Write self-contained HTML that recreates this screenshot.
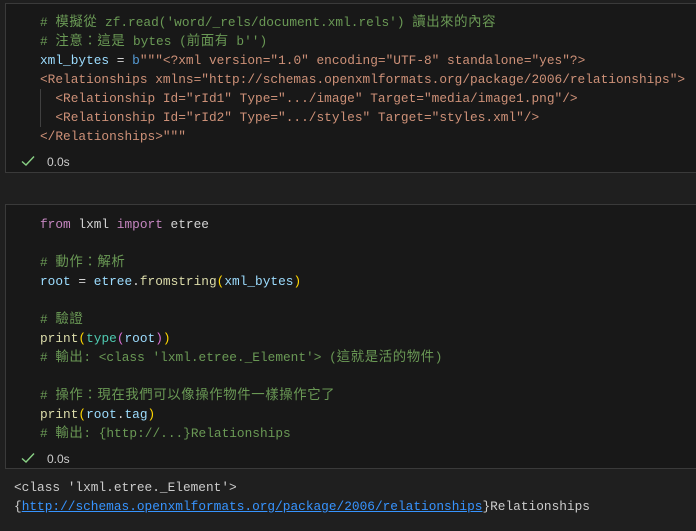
<!DOCTYPE html>
<html><head><meta charset="utf-8"><style>
body{margin:0;width:696px;height:531px;background:#1f1f1f;overflow:hidden;position:relative;font-family:"Liberation Mono","Noto Sans CJK TC",monospace;font-size:12.8px}
.cell{position:absolute;left:5px;width:700px;background:#181818;border:1px solid #3a3a3a;box-sizing:border-box}
.l{position:absolute;left:40px;white-space:pre;line-height:19px;height:19px}
.j{font-size:13.4px;letter-spacing:0.6px}
.c{color:#6a9955}.v{color:#9cdcfe}.s{color:#ce9178}.k{color:#c586c0}.f{color:#dcdcaa}.t{color:#4ec9b0}.y{color:#ffd700}.p{color:#da70d6}.b{color:#569cd6}.w{color:#d4d4d4}
.st{position:absolute;left:47px;color:#cccccc;font-family:"Liberation Sans",sans-serif;font-size:12px}
.ck{position:absolute;left:21px}
.o{position:absolute;left:14px;white-space:pre;color:#cccccc;line-height:19px}
a{color:#3794ff;text-decoration:underline}
</style></head><body>
<div class="cell" style="top:3px;height:170px"></div>
<div class="cell" style="top:204px;height:265px"></div>
<div style="position:absolute;left:40px;top:89px;width:1px;height:38px;background:#404040"></div>

<div class="l c" style="top:13px"># <span class="j">模擬從</span> zf.read('word/_rels/document.xml.rels') <span class="j">讀出來的內容</span></div>
<div class="l c" style="top:32px"># <span class="j">注意：這是</span> bytes (<span class="j">前面有</span> b'')</div>
<div class="l w" style="top:51px"><span class="v">xml_bytes</span> = <span class="b">b</span><span class="s">"""&lt;?xml version="1.0" encoding="UTF-8" standalone="yes"?&gt;</span></div>
<div class="l s" style="top:70px">&lt;Relationships xmlns="http://schemas.openxmlformats.org/package/2006/relationships"&gt;</div>
<div class="l s" style="top:89px">  &lt;Relationship Id="rId1" Type=".../image" Target="media/image1.png"/&gt;</div>
<div class="l s" style="top:108px">  &lt;Relationship Id="rId2" Type=".../styles" Target="styles.xml"/&gt;</div>
<div class="l s" style="top:127px">&lt;/Relationships&gt;"""</div>
<svg class="ck" style="top:155px" width="14" height="12" viewBox="0 0 14 12"><path d="M1 6.5 L5 10 L13 1.5" stroke="#89d185" stroke-width="1.4" fill="none"/></svg>
<div class="st" style="top:155px">0.0s</div>

<div class="l w" style="top:215px"><span class="k">from</span> lxml <span class="k">import</span> etree</div>
<div class="l c" style="top:253px"># <span class="j">動作：解析</span></div>
<div class="l w" style="top:272px"><span class="v">root</span> = <span class="v">etree</span>.<span class="f">fromstring</span><span class="y">(</span><span class="v">xml_bytes</span><span class="y">)</span></div>
<div class="l c" style="top:310px"># <span class="j">驗證</span></div>
<div class="l w" style="top:329px"><span class="f">print</span><span class="y">(</span><span class="t">type</span><span class="p">(</span><span class="v">root</span><span class="p">)</span><span class="y">)</span></div>
<div class="l c" style="top:348px"># <span class="j">輸出</span>: &lt;class 'lxml.etree._Element'&gt; (<span class="j">這就是活的物件</span>)</div>
<div class="l c" style="top:386px"># <span class="j">操作：現在我們可以像操作物件一樣操作它了</span></div>
<div class="l w" style="top:405px"><span class="f">print</span><span class="y">(</span><span class="v">root</span>.<span class="v">tag</span><span class="y">)</span></div>
<div class="l c" style="top:424px"># <span class="j">輸出</span>: {http://...}Relationships</div>
<svg class="ck" style="top:452px" width="14" height="12" viewBox="0 0 14 12"><path d="M1 6.5 L5 10 L13 1.5" stroke="#89d185" stroke-width="1.4" fill="none"/></svg>
<div class="st" style="top:452px">0.0s</div>

<div class="o" style="top:478px">&lt;class 'lxml.etree._Element'&gt;</div>
<div class="o" style="top:497px">{<a>http://schemas.openxmlformats.org/package/2006/relationships</a>}Relationships</div>
</body></html>
